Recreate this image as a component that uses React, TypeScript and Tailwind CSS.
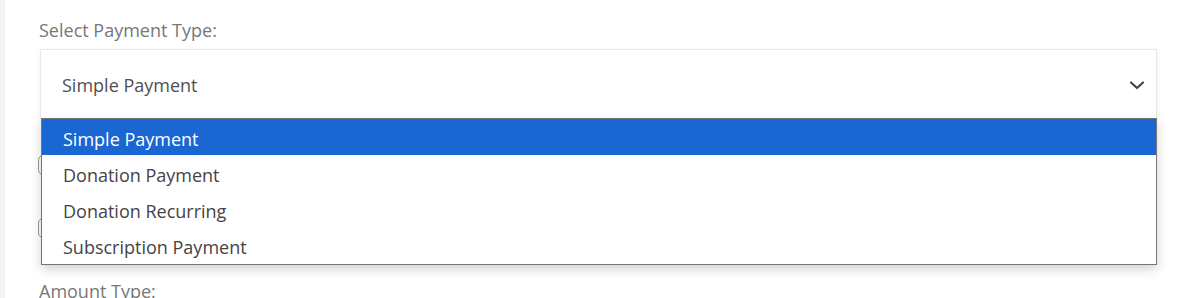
import React from 'react';

const options = ['Simple Payment', 'Donation Payment', 'Donation Recurring', 'Subscription Payment'];

export default function App() {
  const selected = 'Simple Payment';

  return (
    <div className="h-[298px] w-[1190px] overflow-hidden bg-[#f4f4f4] pl-[5px] font-['Open_Sans',sans-serif]">
      <div className="h-full bg-white pl-[35px] pr-[33px] pt-[17px]">
        <label className="-ml-px block text-[18px] leading-[26px] text-[#777]">Select Payment Type:</label>

        <div className="relative mt-[6px]">
          <div className="flex h-[70px] items-center justify-between border border-[#e6e8ee] bg-white pl-[21px] pr-[10px] shadow-[0_2px_6px_rgba(0,0,0,0.06)]">
            <span className="pt-[2px] text-[18px] text-[#505050]">{selected}</span>
            <svg width="18" height="18" viewBox="0 0 18 18" fill="none" className="mt-[2px] text-[#444]">
              <path d="M3 6.5l6 5.5 6-5.5" stroke="currentColor" strokeWidth="2.2" strokeLinecap="round" strokeLinejoin="round" />
            </svg>
          </div>

          {/* form rows hidden behind the open list */}
          <div className="-ml-[2px] mt-[36px] space-y-[43px]">
            <div className="h-[20px] w-[30px] rounded-[5px] border border-[#9a9a9a]" />
            <div className="h-[20px] w-[30px] rounded-[5px] border border-[#9a9a9a]" />
          </div>
          <label className="-ml-px mt-[40px] block text-[18px] leading-[26px] text-[#777]">Amount Type:</label>

          <ul className="absolute left-[1px] top-[69px] w-[1116px] border border-[#767676] bg-white pb-[1px] shadow-[0_4px_10px_rgba(0,0,0,0.18)]">
            {options.map((o) => (
              <li
                key={o}
                className={
                  o === selected
                    ? 'h-[36px] bg-[#1a67d3] pl-[21px] pt-[2px] text-[18px] leading-[36px] text-white'
                    : 'h-[36px] pl-[21px] pt-[2px] text-[18px] leading-[36px] text-[#444]'
                }
              >
                {o}
              </li>
            ))}
          </ul>
        </div>
      </div>
    </div>
  );
}
